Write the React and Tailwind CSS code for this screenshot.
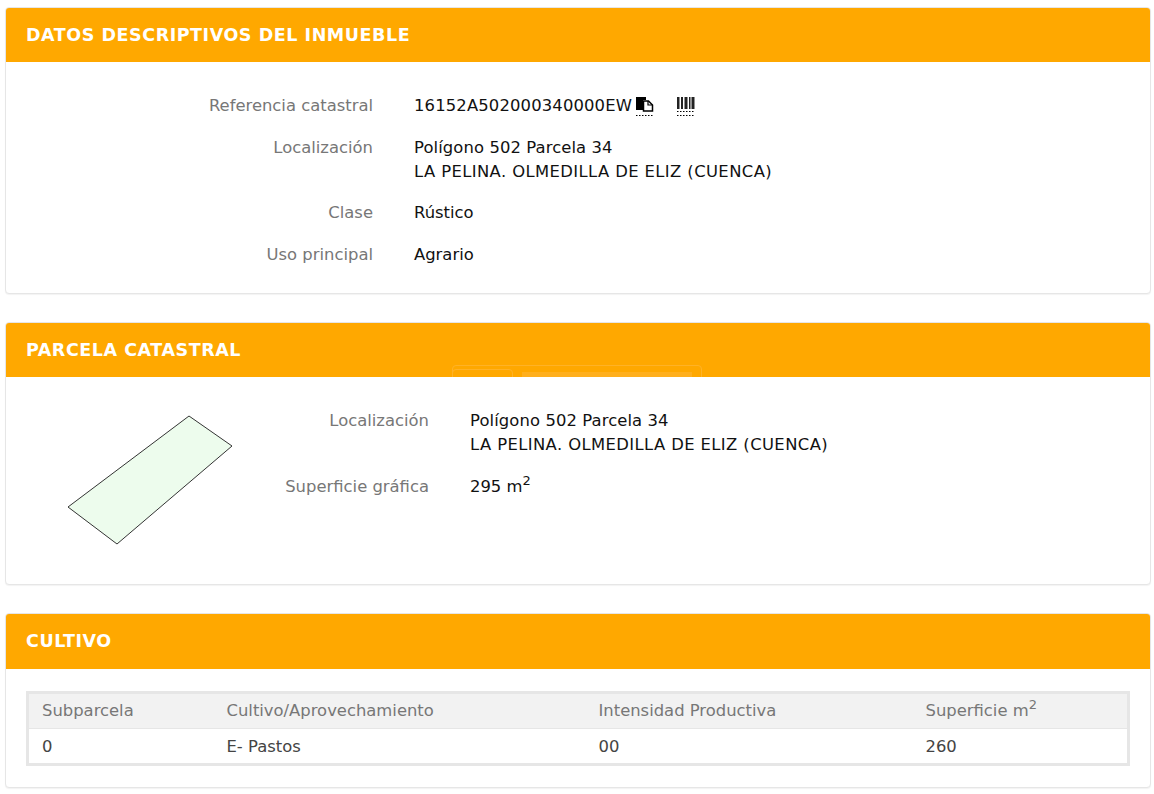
import React from 'react'

function Card({ title, headerClass = 'h-[54px]', bodyClass, overlay, children }) {
  return (
    <section className="bg-white rounded border border-[#e6e6e6] shadow-[0_1px_1px_rgba(0,0,0,0.05)] overflow-hidden">
      <h2 className={`${headerClass} relative overflow-hidden bg-[#ffa800] pl-5 flex items-center text-white font-bold text-[17.500px] tracking-[0.55px]`}>
        {title}
        {overlay}
      </h2>
      <div className={bodyClass}>{children}</div>
    </section>
  )
}

function Row({ label, labelWidth, children }) {
  return (
    <div className="flex">
      <div className={`${labelWidth} shrink-0 text-right text-[#777]`}>{label}</div>
      <div className="ml-[41px] text-[#111]">{children}</div>
    </div>
  )
}

function CopyIcon() {
  return (
    <svg width="20" height="22" viewBox="0 0 20 22" className="ml-[3px]">
      <path d="M1 2h10v3H8v10H1z" fill="#000" />
      <path d="M8.500 6h5l4 4v6h-9z" fill="#fff" stroke="#000" strokeWidth="1.500" />
      <path d="M13 6v4h4.500" fill="none" stroke="#000" strokeWidth="1.200" />
      <path d="M1 20.500h17" stroke="#000" strokeWidth="1" strokeDasharray="1.500 1.500" />
    </svg>
  )
}

function BarcodeIcon() {
  return (
    <svg width="20" height="22" viewBox="0 0 20 22" className="ml-[21px]">
      <path d="M1 2h2.500v12H1zM5 2h2v12H5zM8.500 2h3v12h-3zM13 2h1.500v12H13zM15.500 2h3v12h-3z" fill="#222" />
      <path d="M1 16.500h17M1 20.500h17" stroke="#000" strokeWidth="1" strokeDasharray="1.500 1.500" />
    </svg>
  )
}

function Location() {
  return (
    <>
      <p className="tracking-[0.1px]">Polígono 502 Parcela 34</p>
      <p className="tracking-[0.4px]">LA PELINA. OLMEDILLA DE ELIZ (CUENCA)</p>
    </>
  )
}

export default function App() {
  return (
    <div className="bg-white min-h-[794px] pt-[7px] pl-[5px] pr-[3px] flex flex-col gap-[28px] text-[16.4px] leading-[24px] font-['DejaVu_Sans',sans-serif]">
      <Card title="DATOS DESCRIPTIVOS DEL INMUEBLE" bodyClass="pt-[32px] pb-[26px] flex flex-col gap-[17.500px]">
        <Row label="Referencia catastral" labelWidth="w-[367px]">
          <div className="flex items-center h-[24px] tracking-[0.15px]">
            <span>16152A502000340000EW</span>
            <CopyIcon />
            <BarcodeIcon />
          </div>
        </Row>
        <Row label="Localización" labelWidth="w-[367px]"><Location /></Row>
        <Row label="Clase" labelWidth="w-[367px]">Rústico</Row>
        <Row label="Uso principal" labelWidth="w-[367px]">Agrario</Row>
      </Card>

      <Card
        title="PARCELA CATASTRAL"
        bodyClass="h-[207px] flex"
        overlay={
          <>
            <div className="absolute left-[446px] top-[42px] w-[250px] h-[20px] rounded-t-sm border border-[#ffb226]" />
            <div className="absolute left-[446px] top-[46px] w-[61px] h-[20px] rounded-t-sm border border-[#ffb226]" />
            <div className="absolute left-[516px] top-[49px] w-[170px] h-[8px] bg-[#ffb53a] opacity-50" />
          </>
        }
      >
        <div className="w-[225px] shrink-0 pl-[61px] pt-[38px]">
          <svg width="168" height="132" viewBox="0 0 168 132">
            <path d="M1 92 L122 1 L165 31 L50 129 Z" fill="#edfced" stroke="#333" strokeWidth="1" />
          </svg>
        </div>
        <div className="pt-[32px] flex flex-col gap-[18px]">
          <Row label="Localización" labelWidth="w-[198px]"><Location /></Row>
          <Row label="Superficie gráfica" labelWidth="w-[198px]">295 m<sup className="text-[13px]">2</sup></Row>
        </div>
      </Card>

      <Card title="CULTIVO" headerClass="h-[55px]" bodyClass="pt-[22px] pb-[21px] px-[20px]">
        <table className="w-full border-[3px] border-[#e6e6e6] text-left table-fixed">
          <thead>
            <tr className="bg-[#f2f2f2] text-[#777] h-[36px] border-b border-[#e6e6e6]">
              <th className="font-normal pl-[13px] w-[199px]">Subparcela</th>
              <th className="font-normal w-[372px]">Cultivo/Aprovechamiento</th>
              <th className="font-normal w-[327px]">Intensidad Productiva</th>
              <th className="font-normal">Superficie m<sup className="text-[13px]">2</sup></th>
            </tr>
          </thead>
          <tbody>
            <tr className="h-[36px] text-[#444]">
              <td className="pl-[13px] pt-[3px]">0</td>
              <td className="pt-[3px]">E- Pastos</td>
              <td className="pt-[3px]">00</td>
              <td className="pt-[3px]">260</td>
            </tr>
          </tbody>
        </table>
      </Card>
    </div>
  )
}
